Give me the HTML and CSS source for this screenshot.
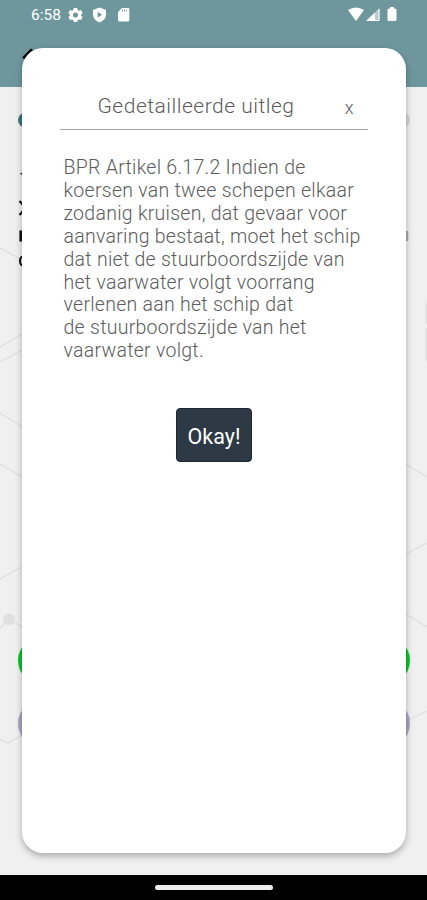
FILE: index.html
```
<!DOCTYPE html>
<html lang="nl">
<head>
<meta charset="utf-8">
<title>Gedetailleerde uitleg</title>
<link rel="stylesheet" href="styles.css">
</head>
<body>
<div class="screen">
  <svg class="backdrop" width="427" height="788" viewBox="0 87 427 788" aria-hidden="true">
    <g class="mesh">
      <path d="M0 248L24 261M0 347L24 333M0 362L24 349M0 413L24 428M0 464L24 478M0 579L24 566M9 619L24 628M9 619L0 628M0 739L8 743L24 734"/>
      <path d="M404 463L427 477M404 555L427 543M404 613L427 627M404 722L427 711"/>
      <path d="M430 301h-2q-2 0-2 3v20M426 328v30q0 4 4 6"/>
    </g>
    <circle class="node" cx="9" cy="619.500" r="6"/>
    <circle class="step" cx="25.500" cy="120" r="7.500"/>
    <circle class="step-off" cx="402.500" cy="120" r="7.500"/>
    <g class="edge">
      <path d="M20.500 173.700h4" stroke-width="1.500"/>
      <path d="M19.500 201l3.500 4M19.500 215l3.500-4"/>
      <path d="M20.700 230.500v11" stroke-width="2.600"/>
      <path d="M23 256.500q-3 .5-3 4.500t3 4.500"/>
    </g>
    <path class="edge-soft" d="M407 231v10"/>
    <rect class="answer-good" x="18" y="645" width="392" height="31" rx="9" ry="15.500"/>
    <rect class="answer" x="18" y="708" width="392" height="31" rx="9" ry="15.500"/>
  </svg>
  <header class="status">
    <span class="clock">6:58</span>
    <svg class="icons-left" width="62" height="16" viewBox="0 0 62 16">
      <g fill="#fff">
        <path fill-rule="evenodd" d="M5.800 1h3.400l.5 2 1.300.7 2-.6 1.700 2.900-1.500 1.300v1.500l1.500 1.300-1.700 2.900-2-.6-1.300.7-.5 2H5.800l-.5-2-1.300-.7-2 .6L.300 10.100l1.500-1.300V7.300L.300 6 2 3.100l2 .6L5.300 3zM7.500 5.500a2.500 2.500 0 1 0 0 5a2.500 2.500 0 0 0 0-5z"/>
        <path fill-rule="evenodd" d="M31.500.600L38 3v4.500q0 5.500-6.500 7.900Q25 13 25 7.500V3zM29.700 5v5.500l4.500-2.700z"/>
        <path fill-rule="evenodd" d="M54 1h6q1.300 0 1.300 1.300v11q0 1.300-1.300 1.300h-8.700Q50 14.600 50 13.300V5zM54 2.500v2h.8v-2zM56 2.500v2h.8v-2zM58 2.500v2h.8v-2z"/>
      </g>
    </svg>
    <svg class="icons-right" width="50" height="16" viewBox="0 0 50 16">
      <path fill="#fff" d="M0 3q8-5 16 0L8 14z"/>
      <path fill="#fff" fill-opacity=".5" d="M18 14L31.500 1v13z"/>
      <path fill="#fff" d="M18 14l9-8.500V14z"/>
      <path fill="none" stroke="#fff" d="M19 13.500h12V2"/>
      <path fill="#fff" d="M42 0h4v1.500h1q1.500 0 1.500 1.500v9.500q0 1.500-1.500 1.500h-6q-1.500 0-1.500-1.500V3q0-1.500 1.500-1.500h1z"/>
    </svg>
  </header>
  <svg class="back" width="12" height="14" viewBox="0 0 12 14"><path d="M1.200 10.200L10 1.500" stroke="#000" stroke-width="2.800"/></svg>
  <main class="dialog">
    <div class="title-row">
      <h1>Gedetailleerde uitleg</h1>
      <span class="close">x</span>
    </div>
    <p class="copy">BPR Artikel 6.17.2 Indien de<br>koersen van twee schepen elkaar<br>zodanig kruisen, dat gevaar voor<br>aanvaring bestaat, moet het schip<br>dat niet de stuurboordszijde van<br>het vaarwater volgt voorrang<br>verlenen aan het schip dat<br>de stuurboordszijde van het<br>vaarwater volgt.</p>
    <button class="okay">Okay!</button>
  </main>
  <footer class="nav"><div class="handle"></div></footer>
</div>
</body>
</html>
```
FILE: styles.css
```
* { box-sizing: border-box; }
body { margin: 0; font-family: Roboto, "Liberation Sans", sans-serif; }
.screen {
  position: relative;
  width: 427px;
  height: 900px;
  overflow: hidden;
  display: flex;
  flex-direction: column;
  align-items: center;
  background: linear-gradient(#6e979d 87px, #f0f0f0 87px);
}
.backdrop { position: absolute; left: 0; top: 87px; }
.mesh { fill: none; stroke: #dfdfdf; stroke-width: 1.3; }
.node { fill: #e0e0e0; }
.step { fill: #42777a; }
.step-off { fill: #d4d4d4; }
.edge { fill: none; stroke: #111; stroke-width: 2; }
.edge-soft { stroke: #aaa; stroke-width: 2.5; }
.answer-good { fill: #0bc52b; }
.answer { fill: #aaa5c4; }
.status {
  width: 100%;
  height: 48px;
  padding: 7px 29px 0 31px;
  display: flex;
  align-items: flex-start;
  color: #fff;
}
.clock { width: 37px; font-size: 15.5px; line-height: 17px; }
.icons-left { overflow: visible; }
.icons-right { margin-left: auto; }
.back { position: absolute; left: 22px; top: 48px; }
.dialog {
  position: relative;
  width: 384px;
  height: 805px;
  padding: 43px 38px 0;
  display: flex;
  flex-direction: column;
  align-items: center;
  border-radius: 21px;
  background: #fff;
  box-shadow: 0 3px 7px rgba(0, 0, 0, .3);
  color: #5c5c5c;
}
.title-row {
  width: 308px;
  height: 39px;
  padding: 0 14px 0 38px;
  display: flex;
  justify-content: space-between;
  border-bottom: 1.5px solid #a5a5a5;
}
h1 { margin: 0; font-size: 21px; line-height: 30px; font-weight: 350; letter-spacing: .5px; white-space: nowrap; }
.close { font-size: 18px; line-height: 33px; font-weight: 350; }
.copy {
  align-self: flex-start;
  margin: 27px 0 0 4px;
  font-size: 19.5px;
  line-height: 22.9px;
  font-weight: 320;
  letter-spacing: .27px;
  white-space: nowrap;
}
.okay {
  width: 76px;
  height: 54px;
  margin-top: 45px;
  padding: 3px 0 0 1px;
  border: 1px solid #1d2731;
  border-radius: 4px;
  background: #2d3945;
  color: #fff;
  font: 400 21.5px Roboto, sans-serif;
}
.nav {
  width: 100%;
  height: 25px;
  margin-top: auto;
  padding-top: 9.5px;
  display: flex;
  justify-content: center;
  background: #000;
}
.handle { width: 118px; height: 5px; border-radius: 3px; background: #eee; }
```
